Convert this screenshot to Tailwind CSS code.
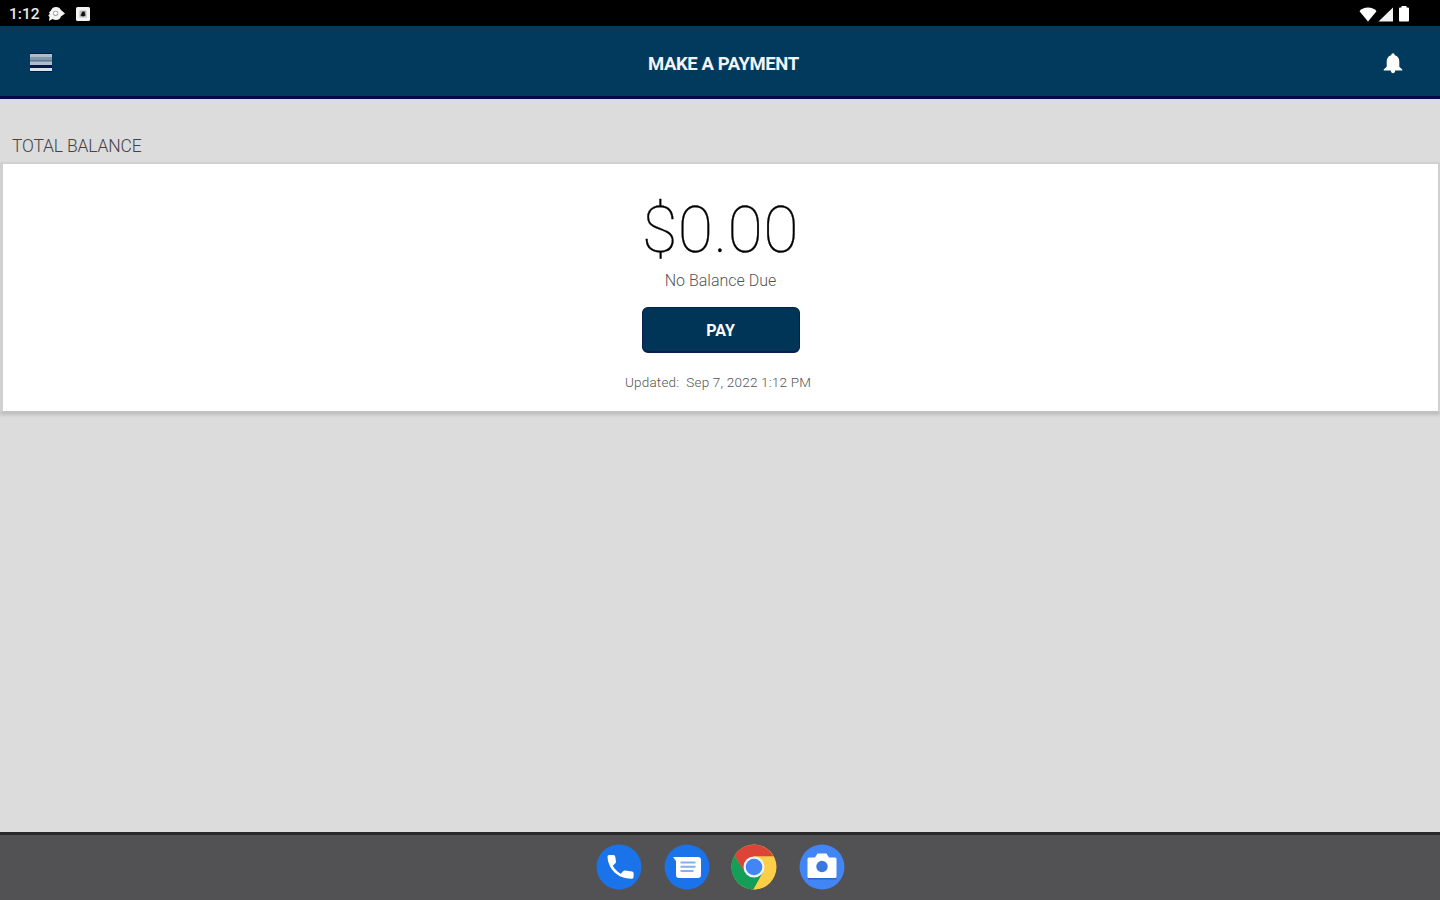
<!DOCTYPE html>
<html lang="en">
<head>
<meta charset="utf-8">
<title>Make a Payment</title>
<script src="https://cdn.jsdelivr.net/npm/@tailwindcss/browser@4"></script>
</head>
<body class="w-[1440px] h-[900px] overflow-hidden flex flex-col bg-[#dcdcdc] font-['Roboto',sans-serif]">
  <div class="h-[26px] shrink-0 bg-black flex items-center justify-between pl-[9px] pr-[29px] text-white">
    <div class="flex items-center pt-[2px]">
      <span class="w-[32px] text-[15.5px] leading-[24px] font-medium whitespace-nowrap text-[#e8e8e8]">1:12</span>
      <svg class="ml-[7px] w-[17px] h-[16px]" viewBox="0 0 17 16"><path d="M4.500 2Q8 0 11.500 2L13 4l4 3.500-4 3-1.500 2.500Q8 15 4.500 13L1 15l.5-4L.3 9.500 1.800 8 1 6.500 2.500 5z" fill="#f4f4f4"/><circle cx="7.600" cy="7.300" r="2.600" fill="#999"/><circle cx="7.600" cy="7.300" r="1.800" fill="#fff"/></svg>
      <svg class="ml-[11px] mr-px w-[14px] h-[14px]" viewBox="0 0 14 14"><rect width="14" height="14" rx="1.500" fill="#f4f4f4"/><path d="M3.500 3.500h7v7h-7z" fill="#bbb"/><path d="M4.500 8.500 6.500 4.500h2L9.500 8.500 7 9.500z" fill="#111"/></svg>
    </div>
    <div class="flex items-center pt-[2px]">
      <svg class="w-[18px] h-[15px]" viewBox="0 0 18 15"><path d="M.5 4.200C4 -.6 14 -.6 17.500 4.200L9 14.500z" fill="#fff"/></svg>
      <svg class="ml-[1px] w-[16px] h-[15px]" viewBox="0 0 16 15"><path d="M.5 14.500H15V.500z" fill="#f2f2f2"/></svg>
      <svg class="ml-[4px] mr-px w-[12px] h-[16px]" viewBox="0 0 12 16"><path d="M3.500 0h5v1.500H10q1 0 1 1V14.500q0 1-1 1H2q-1 0-1-1v-12q0-1 1-1h1.500z" fill="#fff"/></svg>
    </div>
  </div>

  <header class="h-[73px] shrink-0 bg-[#013a5c] border-b-[3px] border-[#04084a] flex items-center justify-between pl-[30px] pr-[36px]">
    <svg class="mt-[4px] w-[22px] h-[20px]" viewBox="0 0 22 20"><path d="M0 1h22v3H0zM0 9h22v3H0z" fill="#adbdcb"/><path d="M0 4h22v5H0z" fill="#8196aa"/><path d="M0 7h22v1H0z" fill="#60798f"/><path d="M0 0h22v1H0zM0 12h22v3H0zM0 18h22v1H0z" fill="#07144f"/><path d="M0 15h22v3H0z" fill="#d9e1ea"/></svg>
    <h1 class="ml-[9px] pt-[6px] w-[147px] text-[18.500px] leading-[24px] font-bold tracking-[-0.420px] whitespace-nowrap text-[#f1f4f8]">MAKE A PAYMENT</h1>
    <svg class="w-[22px] h-[23px] mt-[4px]" viewBox="0 0 22 23"><path d="M11 1.200c1.100 0 1.700.8 1.700 2 3.100.8 4.600 3 4.600 6.200v5.400l3 2.700v1H1.700v-1l3-2.700V9.400c0-3.200 1.500-5.400 4.600-6.200 0-1.200.6-2 1.700-2zM8.800 18.300h4.400c0 2-1 3-2.200 3s-2.200-1-2.200-3z" fill="#fff"/></svg>
  </header>

  <main class="flex-1 flex flex-col">
    <h2 class="pt-[35px] pl-[12px] h-[63px] text-[17.500px] leading-[24px] tracking-[-0.170px] font-light text-[#444] whitespace-nowrap">TOTAL BALANCE</h2>
    <section class="h-[251px] bg-white border-2 border-[#d0d0d0] border-b-[#c2c2c2] border-l-[3px] shadow-[0_2px_3px_rgba(0,0,0,0.14)] flex flex-col items-center text-black">
      <div class="mt-[29px] h-[74px] text-[64.500px] leading-[74px] tracking-[0.400px] font-thin whitespace-nowrap [-webkit-text-stroke:0.3px_black]">$0.00</div>
      <div class="mt-[3px] text-[16px] leading-[22px] font-light text-[#555] whitespace-nowrap">No Balance Due</div>
      <button class="mt-[15px] w-[158px] h-[46px] pt-[3px] shrink-0 rounded-[6px] bg-[#013557] border border-[#0a1d4c] border-b-2 text-white text-[16px] font-bold">PAY</button>
      <div class="mt-[19px] mr-[5px] text-[13.500px] leading-[20px] tracking-[0.200px] font-light text-[#555] whitespace-nowrap">Updated:&nbsp; Sep 7, 2022 1:12 PM</div>
    </section>
  </main>

  <nav class="h-[68px] shrink-0 bg-[#525254] border-t-[3px] border-[#29292b] flex justify-center gap-[21.500px] pt-[8.500px] pl-px">
    <svg class="w-[46px] h-[46px]" viewBox="0 0 46 46"><circle cx="23" cy="23" r="22.500" fill="#1a73e8"/><path d="M11.500 12.500q0-1.500 1.500-1.500h4.500q1.500 0 1.700 1.500l.8 5q.1 1-.6 1.700l-2.600 2.500c2 3.500 4.600 6 8 8l2.600-2.600q.7-.7 1.700-.5l7 .9q1.500.3 1.500 1.800V33q0 1.800-1.800 1.700C22.500 35 12 25.500 11.500 12.500z" fill="#fff"/></svg>
    <svg class="w-[46px] h-[46px]" viewBox="0 0 46 46"><circle cx="23" cy="23" r="22.500" fill="#1a73e8"/><path d="M9 13h25q3 0 3 3v15q0 3-3 3H15q-3 0-3-3V17z" fill="#fff"/><path d="M16.500 18.500h15M16.500 22.800h15M16.500 27h13" stroke="#83b1ee" stroke-width="2"/></svg>
    <svg class="w-[46px] h-[46px]" viewBox="0 0 46 46"><circle cx="23" cy="23" r="22.500" fill="#fbc33a"/><path d="M3.500 11.750A22.500 22.500 0 0 1 42.500 12.500H23L13.500 28z" fill="#dc4437"/><path d="M3.500 11.750A22.500 22.500 0 0 0 22.500 45.500L32.100 28.300 23 23l-9.100 5.300z" fill="#159e58"/><path d="M23 12.500h19.500A22.500 22.500 0 0 1 22.500 45.500L32.100 28.300z" fill="#fdce48"/><circle cx="23" cy="23" r="10.500" fill="#edf3fc"/><circle cx="23" cy="23" r="8.300" fill="#4285f4"/></svg>
    <svg class="w-[46px] h-[46px]" viewBox="0 0 46 46"><circle cx="23" cy="23" r="22.500" fill="#4285f4"/><path d="M9 33.500h28.500v2H9z" fill="#2b67c9"/><path d="M10 13.500h6l2.500-4h9l2.500 4h6q1.500 0 1.500 1.500V32.500q0 1.500-1.500 1.500H10q-1.500 0-1.500-1.500V15q0-1.500 1.500-1.500z" fill="#fff"/><circle cx="23" cy="22.500" r="5.700" fill="#3978df"/></svg>
  </nav>
</body>
</html>
